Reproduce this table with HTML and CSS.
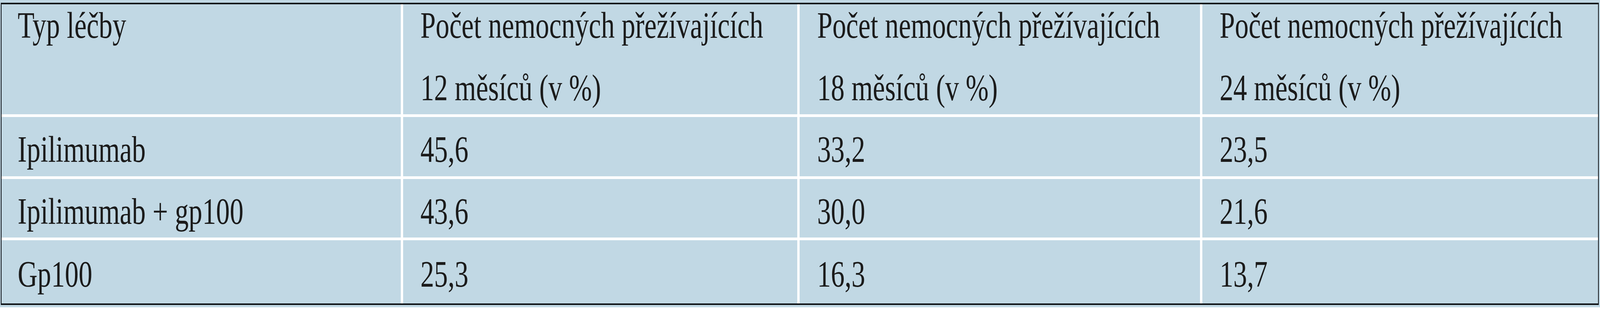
FILE: index.html
```html
<!DOCTYPE html>
<html lang="cs">
<head>
<meta charset="utf-8">
<title>Přežívání nemocných</title>
<link rel="stylesheet" href="styles.css">
</head>
<body>
<div class="sheet">
  <div class="table">
    <div class="cell head first"><span class="line">Typ léčby</span></div>
    <div class="cell head"><span class="line">Počet nemocných přežívajících</span><span class="line">12 měsíců (v %)</span></div>
    <div class="cell head"><span class="line">Počet nemocných přežívajících</span><span class="line">18 měsíců (v %)</span></div>
    <div class="cell head"><span class="line">Počet nemocných přežívajících</span><span class="line">24 měsíců (v %)</span></div>

    <div class="cell body first"><span class="line">Ipilimumab</span></div>
    <div class="cell body"><span class="line">45,6</span></div>
    <div class="cell body"><span class="line">33,2</span></div>
    <div class="cell body"><span class="line">23,5</span></div>

    <div class="cell body first"><span class="line">Ipilimumab + gp100</span></div>
    <div class="cell body"><span class="line">43,6</span></div>
    <div class="cell body"><span class="line">30,0</span></div>
    <div class="cell body"><span class="line">21,6</span></div>

    <div class="cell body last first"><span class="line">Gp100</span></div>
    <div class="cell body last"><span class="line">25,3</span></div>
    <div class="cell body last"><span class="line">16,3</span></div>
    <div class="cell body last"><span class="line">13,7</span></div>
  </div>
</div>
</body>
</html>
```
FILE: styles.css
```css
:root {
  /* type size follows the window width; glyph height is kept at the 800px-tall design */
  --fs: 1.7155vw;
  --sy: tan(atan2(5596px, 100vw));
}

html, body {
  margin: 0;
  padding: 0;
  background: #ffffff;
}

body {
  font-family: "Liberation Serif", "DejaVu Serif", serif;
  color: #1b1b1b;
}

.sheet {
  background: #c1d8e4;
  padding: 7px 0.0715vw 6px 0.0536vw;
}

.table {
  display: grid;
  grid-template-columns: 1395fr 1379fr 1399fr 1384fr;
  grid-template-rows: 282px 152px 150px 162px;
  column-gap: 0.143vw;
  row-gap: 7px;
  background: #ffffff;
  border-style: solid;
  border-color: #111418;
  border-width: 4px 0.0715vw;
}

.cell {
  background: #c1d8e4;
  font-size: var(--fs);
  line-height: 1;
  padding-left: 1.09vw;
  white-space: nowrap;
  min-width: 0;
}

.cell.first {
  padding-left: 1vw;
}

.line {
  display: block;
  transform-origin: 0 calc(0.8375 * var(--fs));
  transform: scaleY(var(--sy));
}

.head {
  display: flex;
  flex-direction: column;
  gap: calc(160px - var(--fs));
  padding-top: calc(86px - 0.8375 * var(--fs));
}

.body {
  padding-top: calc(115px - 0.8375 * var(--fs));
}

.body.last {
  padding-top: calc(119px - 0.8375 * var(--fs));
}
```
